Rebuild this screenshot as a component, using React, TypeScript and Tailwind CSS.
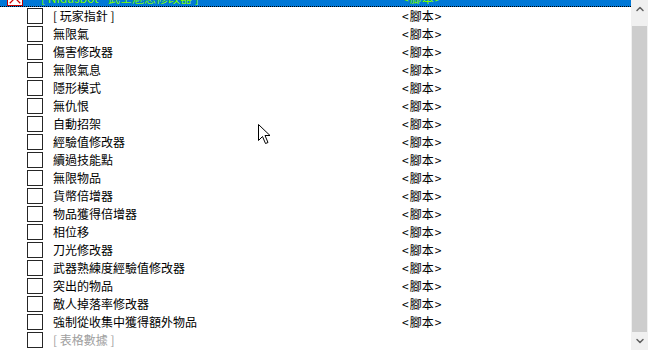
import { ChevronUp, ChevronDown } from 'lucide-react';

const rows: { name: string; value?: string; muted?: boolean }[] = [
  { name: '[ 玩家指針 ]', value: '<腳本>' },
  { name: '無限氣', value: '<腳本>' },
  { name: '傷害修改器', value: '<腳本>' },
  { name: '無限氣息', value: '<腳本>' },
  { name: '隱形模式', value: '<腳本>' },
  { name: '無仇恨', value: '<腳本>' },
  { name: '自動招架', value: '<腳本>' },
  { name: '經驗值修改器', value: '<腳本>' },
  { name: '續過技能點', value: '<腳本>' },
  { name: '無限物品', value: '<腳本>' },
  { name: '貨幣倍增器', value: '<腳本>' },
  { name: '物品獲得倍增器', value: '<腳本>' },
  { name: '相位移', value: '<腳本>' },
  { name: '刀光修改器', value: '<腳本>' },
  { name: '武器熟練度經驗值修改器', value: '<腳本>' },
  { name: '突出的物品', value: '<腳本>' },
  { name: '敵人掉落率修改器', value: '<腳本>' },
  { name: '強制從收集中獲得額外物品', value: '<腳本>' },
  { name: '[ 表格數據 ]', muted: true },
];

function Value({ text }: { text: string }) {
  return (
    <span className="leading-none flex items-center gap-[1px]">
      <span>&lt;</span>
      <span>{text.slice(1, -1)}</span>
      <span>&gt;</span>
    </span>
  );
}

export default function App() {
  return (
    <div
      className="relative flex w-[648px] h-[350px] overflow-hidden bg-white text-[12px] text-black"
      style={{ fontFamily: '"Noto Sans CJK TC", "Liberation Sans", sans-serif' }}
    >
      {/* list */}
      <div className="flex-1 overflow-hidden">
        <div className="-mt-[11px]">
          {/* selected row (scrolled partly out of view) */}
          <div className="flex items-center h-[18px] bg-[#0078d7] border-b border-dotted border-black text-[#7cfc00]">
            <div className="ml-[7px] w-[16px] h-[16px] border border-[#c00000] bg-white relative overflow-hidden">
              <svg viewBox="0 0 16 16" className="absolute inset-0 w-full h-full">
                <path d="M2 2 L14 14 M14 2 L2 14" stroke="#d00000" strokeWidth="1.4" />
              </svg>
            </div>
            <span className="ml-[18px] w-[361px] leading-none whitespace-nowrap">[ Nidasbot - 武士魅惑修改器 ]</span>
            <Value text="<腳本>" />
          </div>
          {rows.map((r, i) => (
            <div key={i} className="flex items-center h-[18px]">
              <div className="ml-[27px] w-[16px] h-[16px] border border-[#262626] bg-white shrink-0" />
              <span className={`ml-[10px] w-[349px] leading-none whitespace-nowrap ${r.muted ? 'text-[#a0a0a0]' : ''}`}>
                {r.name}
              </span>
              {r.value && <Value text={r.value} />}
            </div>
          ))}
        </div>
      </div>

      {/* scrollbar */}
      <div className="flex flex-col w-[17px] bg-[#f0f0f0]">
        <div className="h-[17px] flex items-center justify-center text-[#606060]">
          <ChevronUp size={12} strokeWidth={3} />
        </div>
        <div className="mt-[9px] h-[306px] mx-[1px] bg-[#cdcdcd]" />
        <div className="flex-1 flex items-center justify-center text-[#606060]">
          <ChevronDown size={12} strokeWidth={3} />
        </div>
      </div>

      {/* mouse cursor */}
      <svg className="absolute left-[258px] top-[124px]" width="13" height="21" viewBox="0 0 13 21">
        <path d="M0.5 0.5 L0.5 16.5 L4.5 12.5 L7.5 19.5 L10 18.5 L7 11.5 L12 11.5 Z" fill="white" stroke="black" strokeWidth="1" />
      </svg>
    </div>
  );
}
